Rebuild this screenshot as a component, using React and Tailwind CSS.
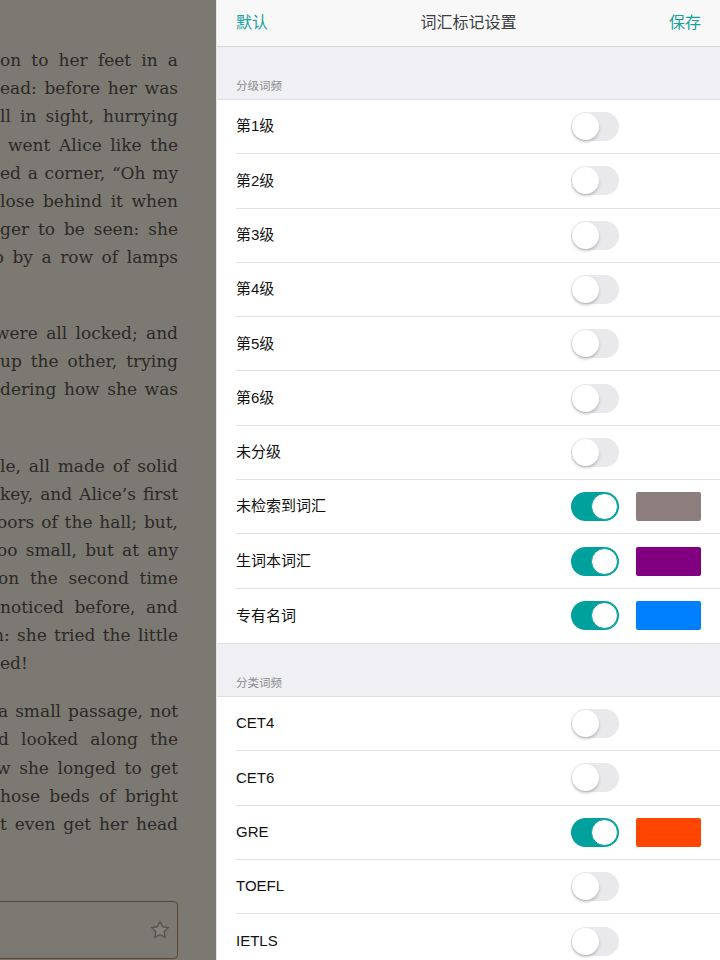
import React from 'react'

const paras = [
  {
    mb: 'mb-[19px]',
    lines: [
      { t: 'on to her feet in a' },
      { t: 'ead: before her was' },
      { t: 'll in sight, hurrying' },
      { t: 'went Alice like the', cls: 'pl-[8px] w-[178px]' },
      { t: 'ed a corner, \u201COh my' },
      { t: 'lose behind it when' },
      { t: 'ger to be seen: she' },
      { t: 'p by a row of lamps', cls: '-ml-[7px] w-[185px]' },
      { t: '' },
    ],
  },
  {
    mb: 'mb-[20px]',
    lines: [
      { t: 'were all locked; and', cls: '-ml-[5px] w-[183px]' },
      { t: 'up the other, trying' },
      { t: 'dering how she was' },
      { t: '' },
    ],
  },
  {
    mb: 'mb-[20px]',
    lines: [
      { t: 'le, all made of solid' },
      { t: 'key, and Alice\u2019s first' },
      { t: 'oors of the hall; but,', cls: '-ml-[3px] w-[181px]' },
      { t: 'oo small, but at any', cls: '-ml-[3px] w-[181px]' },
      { t: 'on the second time', cls: '-ml-[2px] w-[180px]' },
      { t: 'noticed before, and' },
      { t: 'h: she tried the little', cls: '-ml-[7px] w-[185px]' },
      { t: 'ed!', left: true },
    ],
  },
  {
    mb: '',
    lines: [
      { t: 'a small passage, not', cls: '-ml-[2px] w-[180px]' },
      { t: 'd looked along the', cls: '-ml-[2px] w-[180px]' },
      { t: 'w she longed to get', cls: '-ml-[4px] w-[182px]' },
      { t: 'hose beds of bright' },
      { t: 't even get her head' },
    ],
  },
]

const level = [
  { label: '第1级' },
  { label: '第2级' },
  { label: '第3级' },
  { label: '第4级' },
  { label: '第5级' },
  { label: '第6级' },
  { label: '未分级' },
  { label: '未检索到词汇', on: true, color: 'bg-[#8b7e7c]' },
  { label: '生词本词汇', on: true, color: 'bg-[#800080]' },
  { label: '专有名词', on: true, color: 'bg-[#0080ff]' },
]

const category = [
  { label: 'CET4' },
  { label: 'CET6' },
  { label: 'GRE', on: true, color: 'bg-[#ff4500]' },
  { label: 'TOEFL' },
  { label: 'IETLS' },
]

function Toggle({ on }) {
  if (on) {
    return (
      <div className="w-[48px] h-[29px] rounded-full bg-[#00a09c] flex items-center justify-end px-[1px] shrink-0">
        <div className="w-[27px] h-[27px] rounded-full bg-white border border-[#00a09c]" />
      </div>
    )
  }
  return (
    <div className="w-[48px] h-[29px] rounded-full bg-[#e9e9eb] flex items-center px-[1px] shrink-0">
      <div className="w-[27px] h-[27px] rounded-full bg-white shadow-[0_2px_3px_rgba(0,0,0,0.22)]" />
    </div>
  )
}

function Section({ title, rows }) {
  return (
    <div>
      <div className="h-[52px] bg-[#f0f0f4] flex items-end px-[19px] pb-[4px] text-[11.5px] text-[#8a8a8e]">{title}</div>
      <div className="bg-white border-y border-[#dedee2]">
        {rows.map((r, i) => (
          <div key={r.label} className="pl-[19px]">
            <div className={'h-[54.3px] flex items-center pr-[19px] ' + (i < rows.length - 1 ? 'border-b border-[#e3e3e6]' : '')}>
              <span className="flex-1 text-[15px] text-[#111]">{r.label}</span>
              <Toggle on={r.on} />
              <div className={'ml-[17px] w-[65px] h-[29px] rounded-[2px] ' + (r.color || '')} />
            </div>
          </div>
        ))}
      </div>
    </div>
  )
}

export default function App() {
  return (
    <div className="w-[720px] h-[960px] flex overflow-hidden font-['Liberation_Sans','Noto_Sans_CJK_SC',sans-serif]">
      <div className="w-[216px] h-full bg-[#7c7972] overflow-hidden flex flex-col pt-[46px] font-['DejaVu_Serif',serif] text-[17px] leading-[28.2px] text-[#2b2927]">
        {paras.map((p, pi) => (
          <div key={pi} className={p.mb}>
            {p.lines.map((l, li) => (
              <div
                key={li}
                className={
                  'whitespace-nowrap ' +
                  (l.left ? 'text-left ' : 'text-justify [text-align-last:justify] ') +
                  (l.cls ? l.cls : 'w-[178px]')
                }
              >
                {l.t || '\u00A0'}
              </div>
            ))}
          </div>
        ))}
        <div className="mt-auto mb-[1px] -ml-[10px] w-[188px] h-[58px] shrink-0 border border-[#5a4833] rounded-[4px] flex items-center justify-end pr-[6px]">
          <svg width="22" height="22" viewBox="0 0 24 24" fill="#85827c" stroke="#57544f" strokeWidth="1.5" strokeLinejoin="round">
            <path d="M12 2.8l2.8 5.7 6.3.9-4.55 4.45 1.07 6.27L12 17.15l-5.62 2.97 1.07-6.27L2.9 9.4l6.3-.9z" />
          </svg>
        </div>
      </div>
      <div className="flex-1 h-full bg-white border-l border-[#e4e4e7] flex flex-col overflow-hidden">
        <div className="h-[47px] shrink-0 bg-[#f8f8f9] border-b border-[#d8d8db] flex items-center justify-between px-[19px] text-[16px]">
          <span className="text-[#14a09d]">默认</span>
          <span className="text-[#3a3d42]">词汇标记设置</span>
          <span className="text-[#14a09d]">保存</span>
        </div>
        <Section title="分级词频" rows={level} />
        <Section title="分类词频" rows={category} />
      </div>
    </div>
  )
}
